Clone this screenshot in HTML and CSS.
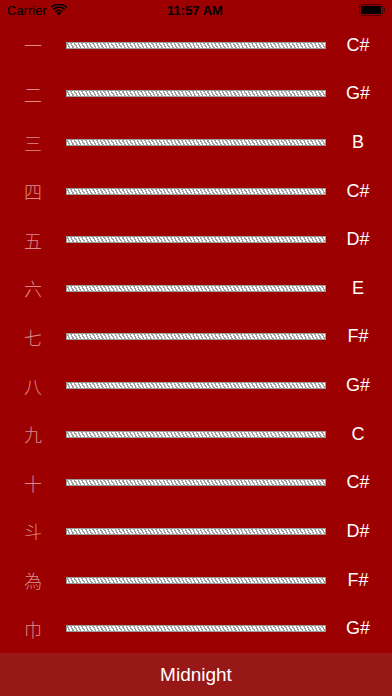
FILE: index.html
```html
<!DOCTYPE html>
<html lang="zh">
<head>
    <meta charset="UTF-8">
    <meta name="viewport" content="width=device-width, initial-scale=1.0">
    <title>Tuner</title>
    <link rel="stylesheet" href="styles.css">
</head>
<body>
    <div class="status-bar">
        <div class="status-left">
            Carrier
            <svg class="wifi" width="16" height="12" viewBox="0 0 16 12">
                <path d="M8 11.5 L5.6 8.9 A3.4 3.4 0 0 1 10.4 8.9 Z" fill="#000"/>
                <path d="M3.8 7.1 A6 6 0 0 1 12.2 7.1 L11.1 8.2 A4.5 4.5 0 0 0 4.9 8.2 Z" fill="#000"/>
                <path d="M1.6 4.9 A9.2 9.2 0 0 1 14.4 4.9 L13.3 6 A7.7 7.7 0 0 0 2.7 6 Z" fill="#000"/>
                <path d="M-0.4 2.9 A12 12 0 0 1 16.4 2.9 L15.3 4 A10.5 10.5 0 0 0 0.7 4 Z" fill="#000"/>
            </svg>
        </div>
        <div class="status-time">11:57 AM</div>
        <div class="status-right">
            <div class="battery"><div class="battery-fill"></div></div>
        </div>
    </div>

    <div class="strings">
        <div class="row"><span class="num">一</span><div class="string"></div><span class="note">C#</span></div>
        <div class="row"><span class="num">二</span><div class="string"></div><span class="note">G#</span></div>
        <div class="row"><span class="num">三</span><div class="string"></div><span class="note">B</span></div>
        <div class="row"><span class="num">四</span><div class="string"></div><span class="note">C#</span></div>
        <div class="row"><span class="num">五</span><div class="string"></div><span class="note">D#</span></div>
        <div class="row"><span class="num">六</span><div class="string"></div><span class="note">E</span></div>
        <div class="row"><span class="num">七</span><div class="string"></div><span class="note">F#</span></div>
        <div class="row"><span class="num">八</span><div class="string"></div><span class="note">G#</span></div>
        <div class="row"><span class="num">九</span><div class="string"></div><span class="note">C</span></div>
        <div class="row"><span class="num">十</span><div class="string"></div><span class="note">C#</span></div>
        <div class="row"><span class="num">斗</span><div class="string"></div><span class="note">D#</span></div>
        <div class="row"><span class="num">為</span><div class="string"></div><span class="note">F#</span></div>
        <div class="row"><span class="num">巾</span><div class="string"></div><span class="note">G#</span></div>
    </div>

    <div class="tuning-bar">Midnight</div>
</body>
</html>
```

FILE: styles.css
```css
body {
    margin: 0;
    width: 392px;
    height: 696px;
    background-color: #9d0000;
    font-family: 'Liberation Sans', 'Noto Sans CJK TC', sans-serif;
    color: #fff;
    display: flex;
    flex-direction: column;
    overflow: hidden;
}

.status-bar {
    height: 20px;
    display: flex;
    align-items: center;
    justify-content: space-between;
    padding: 0 7px;
    color: #000;
    font-size: 13px;
}

.status-left {
    flex: 1;
    display: flex;
    align-items: center;
    gap: 4px;
}

.status-time {
    font-weight: bold;
    font-size: 13px;
}

.status-right {
    flex: 1;
    display: flex;
    justify-content: flex-end;
    padding-right: 2px;
}

.battery {
    width: 20px;
    height: 8px;
    border: 1px solid rgba(0, 0, 0, 0.5);
    border-radius: 3px;
    padding: 1px;
    position: relative;
}

.battery::after {
    content: '';
    position: absolute;
    right: -3px;
    top: 3px;
    width: 1px;
    height: 4px;
    background: rgba(0, 0, 0, 0.5);
}

.battery-fill {
    width: 100%;
    height: 100%;
    background: #000;
    border-radius: 1px;
}

.strings {
    flex: 1;
    display: flex;
    flex-direction: column;
    padding-top: 1px;
}

.row {
    flex: 1;
    display: flex;
    align-items: center;
}

.num {
    width: 66px;
    text-align: center;
    font-family: 'Noto Sans CJK TC', sans-serif;
    font-weight: 300;
    font-size: 18px;
    color: #d98c8c;
}

.string {
    width: 258px;
    height: 5px;
    border: 1px solid #9a9a9a;
    background: repeating-linear-gradient(60deg, #fff 0 1.8px, #a0a0a0 1.8px 3.2px);
}

.note {
    flex: 1;
    text-align: center;
    font-size: 18px;
    padding-right: 2px;
}

.tuning-bar {
    height: 43px;
    background-color: #981818;
    display: flex;
    align-items: center;
    justify-content: center;
    font-size: 19px;
}
```
